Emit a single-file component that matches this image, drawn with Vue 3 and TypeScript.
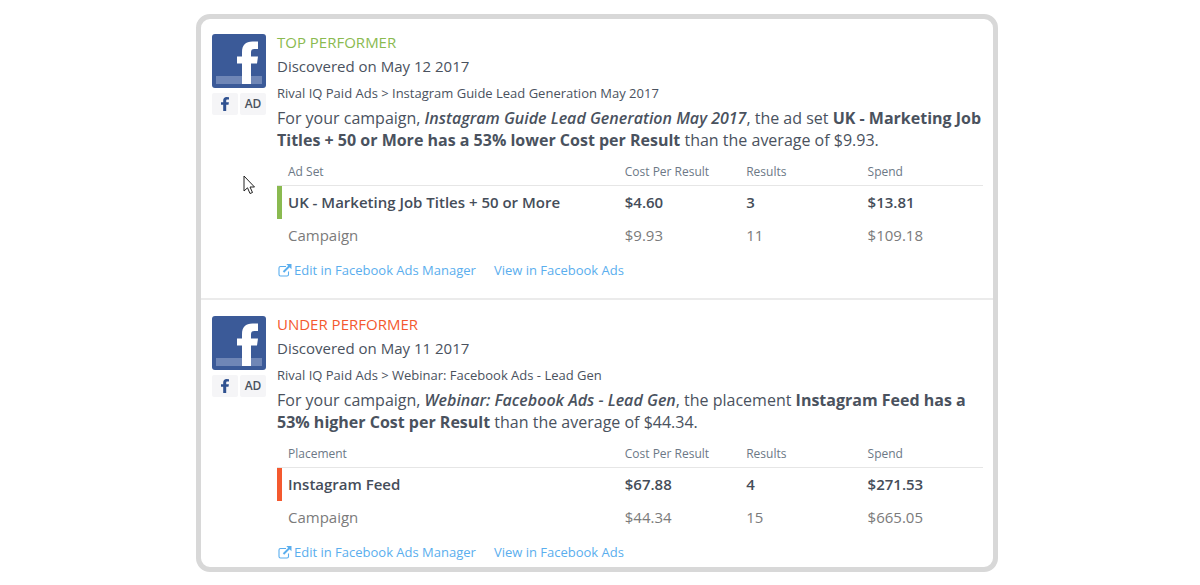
<script setup lang="ts">
interface Row {
  name: string
  cost: string
  results: string
  spend: string
}

interface Insight {
  id: string
  status: string
  tone: 'top' | 'under'
  discovered: string
  path: string
  campaign: string
  middle: string
  finding: string
  ending: string
  dimension: string
  rows: Row[]
}

const insights: Insight[] = [
  {
    id: 'top',
    status: 'TOP PERFORMER',
    tone: 'top',
    discovered: 'Discovered on May 12 2017',
    path: 'Rival IQ Paid Ads > Instagram Guide Lead Generation May 2017',
    campaign: 'Instagram Guide Lead Generation May 2017',
    middle: ', the ad set ',
    finding: 'UK - Marketing Job Titles + 50 or More has a 53% lower Cost per Result',
    ending: ' than the average of $9.93.',
    dimension: 'Ad Set',
    rows: [
      { name: 'UK - Marketing Job Titles + 50 or More', cost: '$4.60', results: '3', spend: '$13.81' },
      { name: 'Campaign', cost: '$9.93', results: '11', spend: '$109.18' },
    ],
  },
  {
    id: 'under',
    status: 'UNDER PERFORMER',
    tone: 'under',
    discovered: 'Discovered on May 11 2017',
    path: 'Rival IQ Paid Ads > Webinar: Facebook Ads - Lead Gen',
    campaign: 'Webinar: Facebook Ads - Lead Gen',
    middle: ', the placement ',
    finding: 'Instagram Feed has a 53% higher Cost per Result',
    ending: ' than the average of $44.34.',
    dimension: 'Placement',
    rows: [
      { name: 'Instagram Feed', cost: '$67.88', results: '4', spend: '$271.53' },
      { name: 'Campaign', cost: '$44.34', results: '15', spend: '$665.05' },
    ],
  },
]
</script>

<template>
  <main class="page">
    <div class="panel">
      <article v-for="item in insights" :key="item.id" class="card" :class="item.tone">
        <div class="source">
          <svg class="logo" viewBox="0 0 54 54" role="img" aria-label="Facebook">
            <rect width="54" height="54" rx="3" fill="#3b5a98" />
            <rect x="4" y="42" width="46" height="8" fill="#6f86b6" />
            <path
              d="M30 50V29.500H25V22.500H30V18.500C30 11 33.500 7.500 40.500 7.500H46V15H42.500C39.800 15 39 16 39 18.500V22.500H46L45 29.500H39V50Z"
              fill="#fff"
            />
          </svg>
          <div class="badges">
            <span class="badge">
              <svg class="badge-icon" viewBox="0 0 8 14" aria-hidden="true">
                <path d="M2.200 14V7.800H0V5.200H2.200V3.500C2.200 1.200 3.500 0 5.600 0L8 .2V2.500H6.600C5.500 2.500 5.200 3 5.200 3.800V5.200H7.900L7.500 7.800H5.200V14Z" fill="#2f5190" />
              </svg>
            </span>
            <span class="badge">AD</span>
          </div>
        </div>
        <div class="body">
          <h2 class="status">{{ item.status }}</h2>
          <p class="date">{{ item.discovered }}</p>
          <p class="path">{{ item.path }}</p>
          <p class="summary">For your campaign, <em>{{ item.campaign }}</em>{{ item.middle }}<strong>{{ item.finding }}</strong>{{ item.ending }}</p>
          <table class="metrics">
            <thead>
              <tr>
                <th scope="col" class="name">{{ item.dimension }}</th>
                <th scope="col">Cost Per Result</th>
                <th scope="col">Results</th>
                <th scope="col">Spend</th>
              </tr>
            </thead>
            <tbody>
              <tr v-for="row in item.rows" :key="row.name">
                <td>{{ row.name }}</td>
                <td>{{ row.cost }}</td>
                <td>{{ row.results }}</td>
                <td>{{ row.spend }}</td>
              </tr>
            </tbody>
          </table>
          <nav class="links">
            <a href="#">
              <svg class="external" viewBox="0 0 14 13" aria-hidden="true">
                <path d="M8 2.500H2.500Q1 2.500 1 4V10.500Q1 12 2.500 12H9Q10.500 12 10.500 10.500V7.500" fill="none" stroke="currentColor" stroke-width="1.100" />
                <path d="M5.500 8L11.500 2" fill="none" stroke="currentColor" stroke-width="1.900" />
                <path d="M8.300 0H13.500V5.200Z" fill="currentColor" />
              </svg>Edit in Facebook Ads Manager</a>
            <a href="#">View in Facebook Ads</a>
          </nav>
        </div>
      </article>
      <svg class="pointer" viewBox="0 0 12 20" aria-hidden="true">
        <path d="M1 1V16L4.500 12.800L7 18.500L9.500 17.500L7 12H11.500Z" fill="#fff" stroke="#222" stroke-width="1" />
      </svg>
    </div>
  </main>
</template>

<style>
body {
  margin: 0;
  background: #fff;
}
</style>

<style scoped>
.page {
  padding: 14px 202px 13px 196px;
  font-family: 'Open Sans', 'Noto Sans', sans-serif;
  font-size: 15px;
  line-height: 22px;
  color: #4a525e;
}

.panel {
  position: relative;
  border: 5px solid #d8d8d8;
  border-radius: 14px;
}

.card {
  display: flex;
  gap: 11px;
  padding: 15px 10px 0 11px;
}

.card + .card {
  padding-top: 16px;
  border-top: 2px solid #ebebeb;
}

.source {
  flex: none;
  width: 54px;
}

.logo {
  display: block;
  width: 54px;
  height: 54px;
}

.badges {
  display: flex;
  gap: 2px;
  margin-top: 5px;
}

.badge {
  display: flex;
  flex: 1;
  align-items: center;
  justify-content: center;
  height: 22px;
  border-radius: 2px;
  background: #f5f5f7;
  font-size: 12px;
  font-weight: 600;
}

.badge-icon {
  width: 8px;
  height: 14px;
}

.body {
  flex: 1;
  min-width: 0;
}

.status,
.date {
  margin: 0;
  font-size: 15px;
  font-weight: 400;
  line-height: 24px;
}

.status {
  margin-top: -4px;
}

.top {
  --accent: #8aba50;
  padding-bottom: 17px;
}

.under {
  --accent: #f4592f;
  padding-bottom: 4px;
}

.status {
  color: var(--accent);
}

.path {
  margin: 4px 0 3px;
  font-size: 13px;
}

.summary {
  margin: 0;
  font-size: 16px;
}

.summary em {
  font-weight: 600;
}

.metrics {
  width: 100%;
  margin-top: 7px;
  table-layout: fixed;
  border-collapse: separate;
  border-spacing: 0;
}

th,
td {
  box-sizing: border-box;
  padding: 0 0 0 11px;
  text-align: left;
}

th {
  width: 17.2%;
  height: 28px;
  border-bottom: 1px solid #e6e6e6;
  color: #6c7886;
  font-size: 12px;
  font-weight: 400;
}

th.name {
  width: 47.7%;
}

th:last-child {
  width: auto;
}

td {
  height: 33px;
  padding-bottom: 2px;
  color: #7b7b7b;
}

tbody tr:first-child td {
  color: #454d59;
  font-weight: 600;
}

tbody tr:first-child td:first-child {
  padding-left: 6px;
  border-left: 5px solid var(--accent);
}

.links {
  display: flex;
  gap: 18px;
  margin-top: 7px;
  padding-left: 1px;
  font-size: 13px;
}

.links a {
  display: inline-flex;
  align-items: center;
  gap: 2px;
  color: #5aaeee;
  text-decoration: none;
}

.external {
  width: 14px;
  height: 13px;
}

.pointer {
  position: absolute;
  top: 156px;
  left: 42px;
  width: 12px;
  height: 20px;
}
</style>
